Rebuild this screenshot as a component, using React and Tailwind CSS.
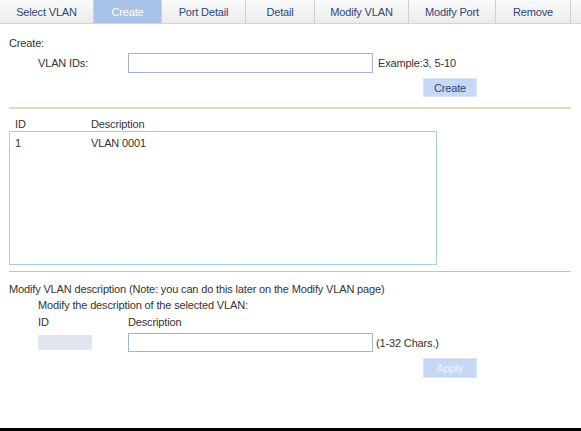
const tabs = [
  { label: "Select VLAN", w: "w-[94px]" },
  { label: "Create", w: "w-[68px]", active: true },
  { label: "Port Detail", w: "w-[84px]" },
  { label: "Detail", w: "w-[69px]" },
  { label: "Modify VLAN", w: "w-[94px]" },
  { label: "Modify Port", w: "w-[87px]" },
  { label: "Remove", w: "w-[75px]" },
];

export default function App() {
  return (
    <div className="w-[581px] h-[431px] bg-white flex flex-col text-[11px] tracking-[-0.15px] text-[#333] font-['Liberation_Sans',Arial,sans-serif] leading-[14px]">
      {/* tabs */}
      <div className="flex h-[24px] border-b border-[#d4d4d4] shrink-0">
        {tabs.map((t) => (
          <div
            key={t.label}
            className={`${t.w} h-full flex items-center justify-center border-r border-[#d0d0d0] ${
              t.active
                ? "bg-[#a9c3e8] text-white"
                : "bg-gradient-to-b from-[#fafafa] to-[#ececec] text-[#2b4678]"
            }`}
          >
            {t.label}
          </div>
        ))}
        <div className="flex-1 h-full bg-gradient-to-b from-[#fafafa] to-[#ececec]" />
      </div>

      <div className="flex-1 flex flex-col px-[9px]">
        <div className="mt-[12px]">Create:</div>
        <div className="mt-[3px] flex items-center h-[20px]">
          <div className="w-[119px] pl-[29px]">VLAN IDs:</div>
          <input className="w-[245px] h-[20px] border border-[#a5b4d0] outline-none" />
          <span className="ml-[5px]">Example:3, 5-10</span>
        </div>
        <div className="mt-[5px] flex">
          <button className="ml-[414px] w-[54px] h-[19px] bg-[#c7d8f5] text-[#2b4678] border border-[#d8e4f8]">
            Create
          </button>
        </div>
        <div className="mt-[10px] w-[562px] h-[2px] bg-[#dedcbc]" />

        <div className="mt-[8px] flex h-[14px]">
          <div className="w-[82px] pl-[6px]">ID</div>
          <div>Description</div>
        </div>
        <div className="mt-0 w-[428px] h-[134px] border border-[#a8cbe8] pt-[4px]">
          <div className="flex">
            <div className="w-[81px] pl-[5px]">1</div>
            <div>VLAN 0001</div>
          </div>
        </div>
        <div className="mt-[6px] w-[562px] h-[1px] bg-[#c9c7a0]" />

        <div className="mt-[10px]">Modify VLAN description (Note: you can do this later on the Modify VLAN page)</div>
        <div className="mt-[2px] pl-[29px]">Modify the description of the selected VLAN:</div>
        <div className="mt-[3px] flex pl-[29px]">
          <div className="w-[90px]">ID</div>
          <div>Description</div>
        </div>
        <div className="mt-[4px] flex items-center pl-[29px] h-[19px]">
          <div className="w-[54px] h-[15px] bg-[#dfe6f2]" />
          <div className="w-[36px]" />
          <input className="w-[245px] h-[19px] border border-[#a5b4d0] outline-none" />
          <span className="ml-[3px]">(1-32 Chars.)</span>
        </div>
        <div className="mt-[6px] flex">
          <button className="ml-[414px] w-[54px] h-[20px] bg-[#c7d8f5] text-[#eef2fa] border border-[#d8e4f8]">
            Apply
          </button>
        </div>
      </div>
      <div className="h-[3px] bg-black shrink-0" />
    </div>
  );
}
